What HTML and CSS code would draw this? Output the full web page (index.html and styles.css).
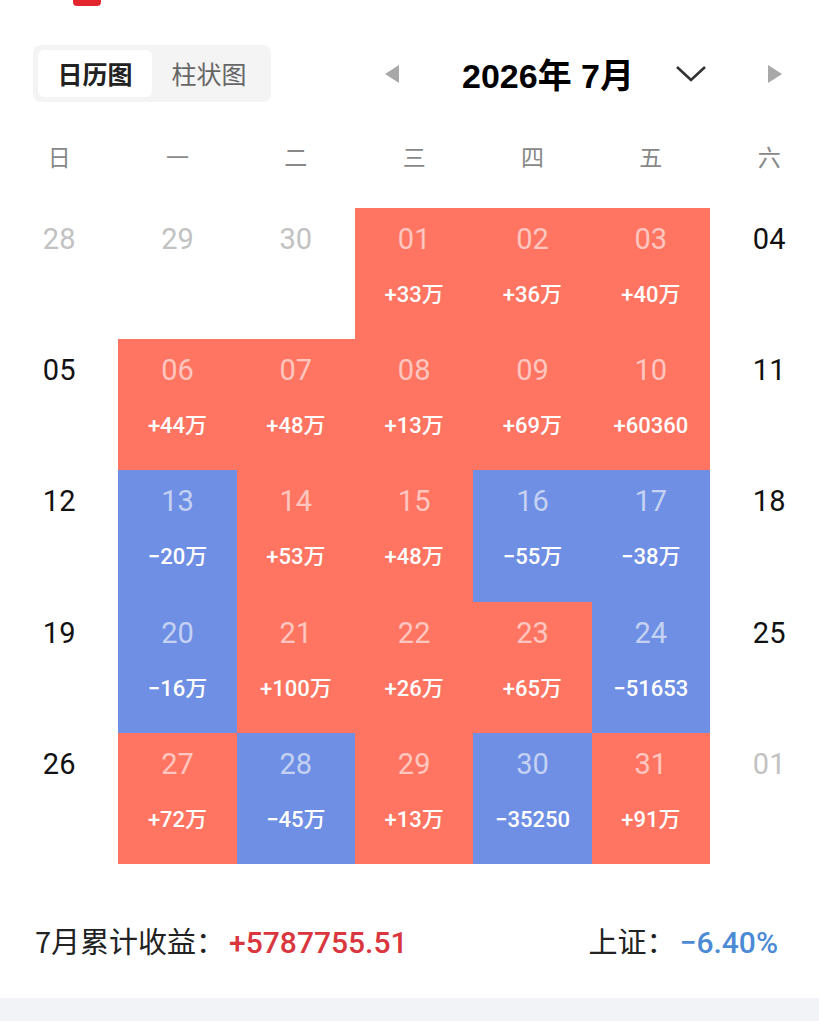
FILE: index.html
```html
<!DOCTYPE html>
<html lang="zh">
<head>
<meta charset="utf-8">
<link rel="stylesheet" href="styles.css">
</head>
<body>
<div class="page">
  <div class="indicator"></div>
  <div class="toolbar">
    <div class="tabs">
      <div class="tab active">日历图</div>
      <div class="tab">柱状图</div>
    </div>
    <div class="month-nav">
      <svg class="arrow" width="16" height="20" viewBox="0 0 16 20"><polygon points="15,1 15,19 1,10" fill="#a8a8a8"/></svg>
      <div class="title">2026年 7月</div>
      <svg class="chevron" width="32" height="20" viewBox="0 0 32 20"><polyline points="2,3 16,16 30,3" fill="none" stroke="#333" stroke-width="2.6"/></svg>
      <svg class="arrow right" width="16" height="20" viewBox="0 0 16 20"><polygon points="1,1 1,19 15,10" fill="#a8a8a8"/></svg>
    </div>
  </div>
  <div class="weekdays">
    <span>日</span><span>一</span><span>二</span><span>三</span><span>四</span><span>五</span><span>六</span>
  </div>
  <div class="calendar">
    <div class="cell out"><div class="day">28</div></div>
    <div class="cell out"><div class="day">29</div></div>
    <div class="cell out"><div class="day">30</div></div>
    <div class="cell up"><div class="day">01</div><div class="amt">+33万</div></div>
    <div class="cell up"><div class="day">02</div><div class="amt">+36万</div></div>
    <div class="cell up"><div class="day">03</div><div class="amt">+40万</div></div>
    <div class="cell"><div class="day">04</div></div>

    <div class="cell"><div class="day">05</div></div>
    <div class="cell up"><div class="day">06</div><div class="amt">+44万</div></div>
    <div class="cell up"><div class="day">07</div><div class="amt">+48万</div></div>
    <div class="cell up"><div class="day">08</div><div class="amt">+13万</div></div>
    <div class="cell up"><div class="day">09</div><div class="amt">+69万</div></div>
    <div class="cell up"><div class="day">10</div><div class="amt">+60360</div></div>
    <div class="cell"><div class="day">11</div></div>

    <div class="cell"><div class="day">12</div></div>
    <div class="cell down"><div class="day">13</div><div class="amt">−20万</div></div>
    <div class="cell up"><div class="day">14</div><div class="amt">+53万</div></div>
    <div class="cell up"><div class="day">15</div><div class="amt">+48万</div></div>
    <div class="cell down"><div class="day">16</div><div class="amt">−55万</div></div>
    <div class="cell down"><div class="day">17</div><div class="amt">−38万</div></div>
    <div class="cell"><div class="day">18</div></div>

    <div class="cell"><div class="day">19</div></div>
    <div class="cell down"><div class="day">20</div><div class="amt">−16万</div></div>
    <div class="cell up"><div class="day">21</div><div class="amt">+100万</div></div>
    <div class="cell up"><div class="day">22</div><div class="amt">+26万</div></div>
    <div class="cell up"><div class="day">23</div><div class="amt">+65万</div></div>
    <div class="cell down"><div class="day">24</div><div class="amt">−51653</div></div>
    <div class="cell"><div class="day">25</div></div>

    <div class="cell"><div class="day">26</div></div>
    <div class="cell up"><div class="day">27</div><div class="amt">+72万</div></div>
    <div class="cell down"><div class="day">28</div><div class="amt">−45万</div></div>
    <div class="cell up"><div class="day">29</div><div class="amt">+13万</div></div>
    <div class="cell down"><div class="day">30</div><div class="amt">−35250</div></div>
    <div class="cell up"><div class="day">31</div><div class="amt">+91万</div></div>
    <div class="cell out"><div class="day">01</div></div>
  </div>
  <div class="footer">
    <div class="stat"><span class="label">7月累计收益：</span><span class="val red">+5787755.51</span></div>
    <div class="stat right"><span class="label">上证：</span><span class="val blue">−6.40%</span></div>
  </div>
  <div class="bottom-bar"></div>
</div>
</body>
</html>
```
FILE: styles.css
```css
html, body {
  margin: 0;
  padding: 0;
  background: #fff;
  overflow: hidden;
}
.page {
  width: 819px;
  height: 1021px;
  overflow: hidden;
  font-family: Roboto, "Noto Sans CJK SC", sans-serif;
  color: #111;
}
.indicator {
  width: 28px;
  height: 6px;
  margin-left: 73px;
  background: #e3262e;
  border-radius: 0 0 4px 4px;
}
.toolbar {
  display: flex;
  align-items: center;
  margin-top: 39px;
  height: 57px;
}
.tabs {
  display: flex;
  margin-left: 33px;
  width: 238px;
  height: 57px;
  box-sizing: border-box;
  padding: 5px;
  background: #f4f4f4;
  border-radius: 8px;
}
.tab {
  width: 115px;
  height: 47px;
  line-height: 47px;
  text-align: center;
  font-family: "Noto Sans CJK SC", sans-serif;
  font-size: 25px;
  color: #666;
}
.tab.active {
  background: #fff;
  border-radius: 6px;
  color: #222;
  font-weight: 700;
}
.month-nav {
  display: flex;
  align-items: center;
  margin-left: 113px;
}
.arrow {
  display: block;
}
.title {
  margin-left: 62px;
  font-family: "Liberation Sans", "Noto Sans CJK SC", sans-serif;
  font-weight: 700;
  font-size: 34px;
  color: #000;
  width: 213px;
  white-space: nowrap;
}
.chevron {
  display: block;
}
.arrow.right {
  margin-left: 60px;
}
.weekdays {
  display: grid;
  grid-template-columns: repeat(7, 118.33px);
  width: 828px;
  margin-top: 26px;
  height: 56px;
  line-height: 56px;
  text-align: center;
  font-family: "Noto Sans CJK SC", sans-serif;
  font-size: 23px;
  color: #888;
}
.calendar {
  display: grid;
  grid-template-columns: repeat(7, 118.33px);
  grid-template-rows: repeat(5, 131.2px);
  width: 828px;
  margin-top: 24px;
}
.cell {
  text-align: center;
  padding-top: 13px;
  box-sizing: border-box;
}
.day {
  font-size: 29px;
  line-height: 36px;
  color: #111;
}
.cell.out .day {
  color: #c2c2c2;
}
.cell.up {
  background: #ff7562;
}
.cell.down {
  background: #6e8fe3;
}
.cell.up .day,
.cell.down .day {
  color: rgba(255, 255, 255, 0.6);
}
.amt {
  margin-top: 24px;
  font-family: Roboto, "Noto Sans CJK SC", sans-serif;
  font-size: 22px;
  line-height: 28px;
  font-weight: 500;
  color: #fff;
}
.footer {
  display: flex;
  justify-content: space-between;
  height: 134px;
  box-sizing: border-box;
  padding: 57px 41px 0 35px;
}
.stat {
  font-size: 29px;
  line-height: 38px;
  white-space: nowrap;
}
.label {
  font-family: "Noto Sans CJK SC", sans-serif;
  color: #222;
  margin-right: 4px;
}
.val {
  font-family: Roboto, sans-serif;
  font-size: 30px;
  font-weight: 500;
}
.val.red {
  color: #d9363e;
}
.val.blue {
  color: #4d8ad6;
}
.bottom-bar {
  height: 23px;
  background: #f2f3f7;
}
```
